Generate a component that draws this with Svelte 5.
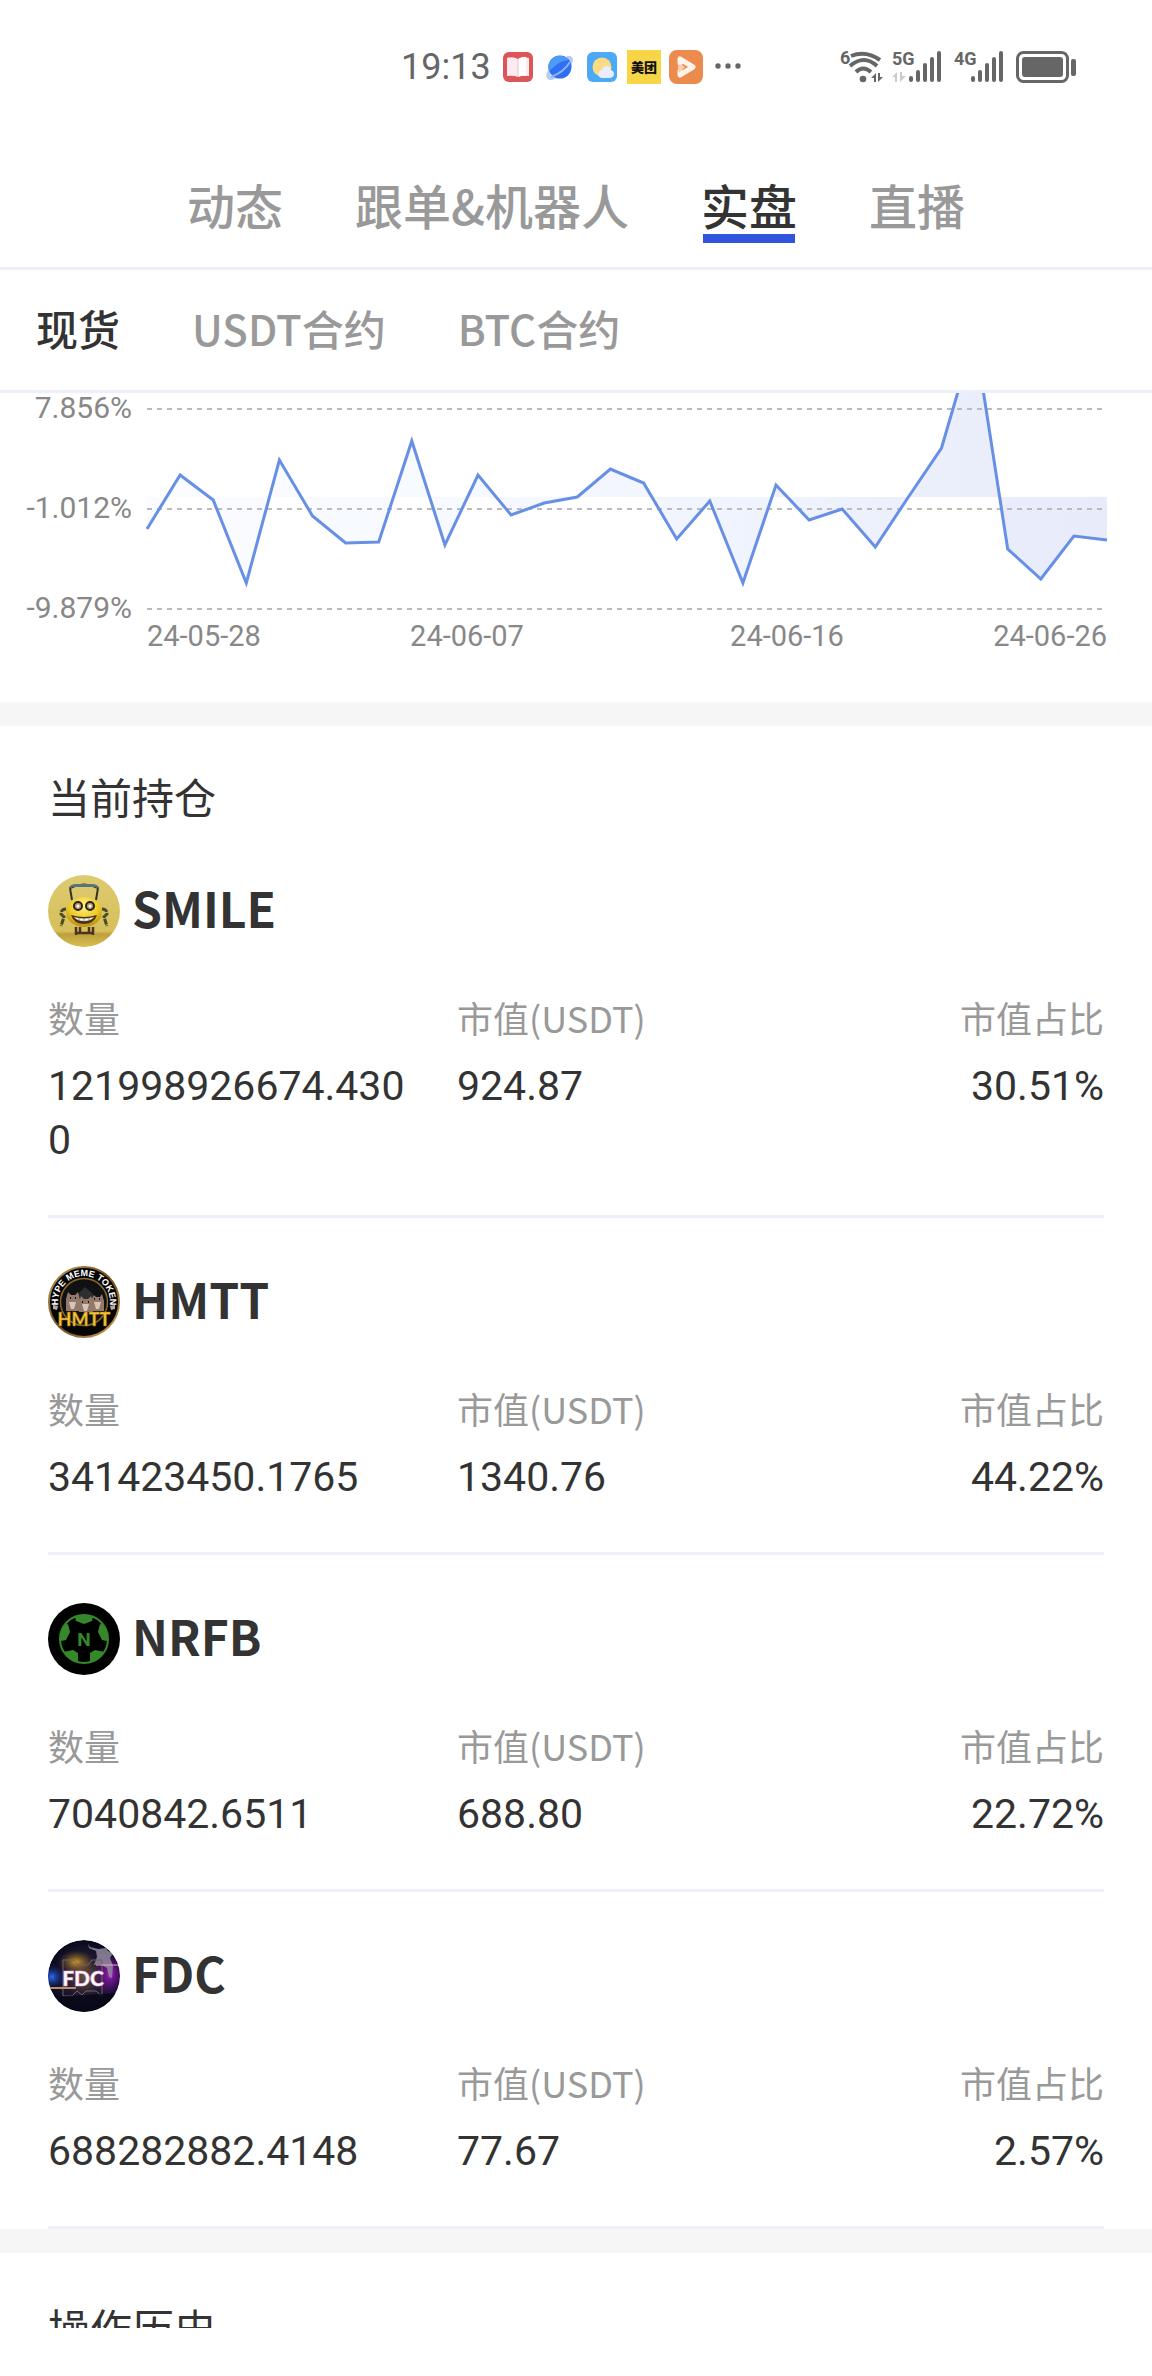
<script lang="ts">
	type Holding = {
		symbol: string;
		amount: string;
		value: string;
		share: string;
	};

	const tabs = ['动态', '跟单&机器人', '实盘', '直播'];
	const markets = ['现货', 'USDT合约', 'BTC合约'];

	let activeTab = $state('实盘');
	let activeMarket = $state('现货');

	const holdings: Holding[] = [
		{ symbol: 'SMILE', amount: '121998926674.4300', value: '924.87', share: '30.51%' },
		{ symbol: 'HMTT', amount: '341423450.1765', value: '1340.76', share: '44.22%' },
		{ symbol: 'NRFB', amount: '7040842.6511', value: '688.80', share: '22.72%' },
		{ symbol: 'FDC', amount: '688282882.4148', value: '77.67', share: '2.57%' }
	];

	// chart geometry, in viewBox units
	const left = 147;
	const right = 1107;
	const baseline = 104;
	const levels = [
		136, 82, 107, 190, 67, 123, 150, 149, 48, 152, 82, 122, 110, 104, 76, 90, 146, 108, 190, 92,
		127, 116, 154, 104, 55, -58, 156, 186, 143, 147
	];
	const step = (right - left) / (levels.length - 1);
	const line = levels.map((y, i) => `${(left + i * step).toFixed(1)},${y}`).join(' ');
	const area = `${left},${baseline} ${line} ${right},${baseline}`;

	const grid = [
		{ y: 16, label: '7.856%' },
		{ y: 116, label: '-1.012%' },
		{ y: 216, label: '-9.879%' }
	];
	const dates = [
		{ x: left, anchor: 'start', label: '24-05-28' },
		{ x: 467, anchor: 'middle', label: '24-06-07' },
		{ x: 787, anchor: 'middle', label: '24-06-16' },
		{ x: right, anchor: 'end', label: '24-06-26' }
	];
</script>

{#snippet bars()}
	<rect x="0" y="25" width="4" height="6" rx="2" />
	<rect x="7" y="19" width="4" height="12" rx="2" />
	<rect x="14" y="12" width="4" height="19" rx="2" />
	<rect x="21" y="6" width="4" height="25" rx="2" />
	<rect x="28" y="0" width="4" height="31" rx="2" />
{/snippet}

{#snippet coin(symbol: string)}
	<svg class="coin" viewBox="0 0 72 72" aria-hidden="true">
		{#if symbol === 'SMILE'}
			<defs>
				<linearGradient id="gold" x1="0" y1="0" x2="0" y2="1">
					<stop offset="0" stop-color="#decb70" />
					<stop offset="0.78" stop-color="#d6bf5c" />
					<stop offset="0.82" stop-color="#bd9f3e" />
					<stop offset="1" stop-color="#d9c050" />
				</linearGradient>
				<radialGradient id="lemon" cx="0.5" cy="0.3" r="0.7">
					<stop offset="0" stop-color="#fff38a" />
					<stop offset="0.6" stop-color="#eccb27" />
					<stop offset="1" stop-color="#b88a12" />
				</radialGradient>
			</defs>
			<circle cx="36" cy="36" r="36" fill="url(#gold)" />
			<path d="M24 25 22 13q14-7 28 0l-2 12" fill="none" stroke="#35331f" stroke-width="2" />
			<path d="M21 14q0-5 8-5h14q8 0 8 5l-4-2H25z" fill="#55737a" />
			<path
				d="M18 34q-5 0-5 5l3 3-3 9M54 34q5 0 5 5l-3 3 3 9"
				fill="none"
				stroke="#4b4a2c"
				stroke-width="3"
				stroke-dasharray="6 1"
			/>
			<ellipse cx="36" cy="37" rx="18" ry="15" fill="url(#lemon)" />
			<circle cx="30" cy="31" r="4" fill="#c59b65" stroke="#27231b" stroke-width="2" />
			<circle cx="42" cy="31" r="4" fill="#c59b65" stroke="#27231b" stroke-width="2" />
			<circle cx="30" cy="31" r="1.5" fill="#fff" />
			<circle cx="42" cy="31" r="1.5" fill="#fff" />
			<path d="M23 40q13 4 26 0-3 9-13 9t-13-9z" fill="#4d3210" />
			<path d="M26 42q10 3 20 0-3 4-10 4t-10-4z" fill="#f4f8f4" />
			<path d="M31 42v4M36 43v4M41 42v4" stroke="#777" stroke-width="0.7" />
			<path d="M28 52v8M32 52v7M41 52v7M45 52v8M28 58h17" stroke="#4d341f" stroke-width="2.5" />
		{:else if symbol === 'HMTT'}
			<defs>
				<linearGradient id="rim" x1="0" y1="0" x2="1" y2="1">
					<stop offset="0" stop-color="#c79b51" />
					<stop offset="0.5" stop-color="#6f4b20" />
					<stop offset="1" stop-color="#d1a65e" />
				</linearGradient>
			</defs>
			<circle cx="36" cy="36" r="35" fill="#050505" stroke="url(#rim)" stroke-width="2" />
			<circle cx="36" cy="36" r="23.5" fill="#101113" stroke="#8b692b" stroke-width="1.5" />
			<path id="ring" d="M12 46A26 26 0 1 1 60 46" fill="none" />
			<text class="coin-ring">
				<textPath href="#ring" startOffset="50%" text-anchor="middle">HYPE MEME TOKEN</textPath>
			</text>
			<path d="M30 28l7-7 8 7v14H30z" fill="#2c2e31" />
			<path
				d="M18 45V33l2-7 3 3h4l3-3 2 8v11zM31 46V36l2-6 3 3h4l3-3 2 6v10zM43 45V34l3-5 2 2h4l2-3 2 7v10z"
				fill="#92796a"
			/>
			<path d="M21 36h7l-2 7h-3zM34 38h7l-2 7h-3zM46 36h7l-2 7h-3z" fill="#d7c5b8" />
			<path
				d="M22 32h1m4 0h1m6 4h1m5 0h1m5-3h1m4 0h1"
				stroke="#1b1410"
				stroke-width="2"
			/>
			<path d="M5 39l5 1-1 4-4-1zM67 39l-5 1 1 4 4-1z" fill="#b7aaa0" />
			<text class="coin-hmtt" x="36" y="60" text-anchor="middle">HMTT</text>
		{:else if symbol === 'NRFB'}
			<circle cx="36" cy="36" r="36" fill="#000" />
			<clipPath id="ball"><circle cx="36" cy="36" r="24" /></clipPath>
			<g clip-path="url(#ball)" fill="#35892a">
				<path d="M26 9h20l-2 9-8 3-8-3z" />
				<path d="M9 23l11-2 2 8-4 8-9 2z" />
				<path d="M63 23l-11-2-2 8 4 8 9 2z" />
				<path d="M15 49l10-2 5 3v12H17z" />
				<path d="M57 49l-10-2-5 3v12h13z" />
			</g>
			<circle cx="36" cy="36" r="24" fill="none" stroke="#35892a" stroke-width="2" />
			<text class="coin-nrfb" x="36" y="43" text-anchor="middle">N</text>
		{:else}
			<defs>
				<radialGradient id="night">
					<stop offset="0" stop-color="#67513a" />
					<stop offset="0.55" stop-color="#1e1930" />
					<stop offset="1" stop-color="#07091c" />
				</radialGradient>
				<radialGradient id="violet">
					<stop offset="0" stop-color="#a41cc4" />
					<stop offset="1" stop-color="#5c0e8a" stop-opacity="0" />
				</radialGradient>
				<radialGradient id="azure">
					<stop offset="0" stop-color="#2c6df5" />
					<stop offset="1" stop-color="#142f99" stop-opacity="0" />
				</radialGradient>
				<radialGradient id="amber">
					<stop offset="0" stop-color="#d29b27" />
					<stop offset="1" stop-color="#6b4c1b" stop-opacity="0" />
				</radialGradient>
				<clipPath id="disc"><circle cx="36" cy="36" r="36" /></clipPath>
			</defs>
			<g clip-path="url(#disc)">
				<circle cx="36" cy="36" r="36" fill="url(#night)" />
				<ellipse cx="62" cy="34" rx="17" ry="24" fill="url(#violet)" />
				<circle cx="4" cy="37" r="12" fill="url(#azure)" />
				<ellipse cx="28" cy="22" rx="18" ry="12" fill="url(#amber)" />
				<path
					d="M40 4l2 3 8 2 8-1 2 3 5 2-3 5 3 8-1 12-3-1-2-9-7-4-6 1 3-8-1-6-7-3z"
					fill="#92899c"
					opacity="0.85"
				/>
				<path d="M15 20h11l4 5h10l4-5h10v36l-6-5H38l-4 4-5-4-5 5h-9z" fill="none" stroke="#746173" />
				<path d="M48 25h24" stroke="#e6a6c8" />
				<path d="M0 48h28" stroke="#bd8c6b" stroke-width="2" />
				<path d="M0 57l72-4v19H0z" fill="#080818" opacity="0.8" />
				<text class="coin-fdc" x="35" y="46" text-anchor="middle">FDC</text>
			</g>
		{/if}
	</svg>
{/snippet}

<div class="screen">
	<header class="status-bar">
		<div class="status-left">
			<time>19:13</time>
			<svg width="30" height="30" viewBox="0 0 30 30" aria-hidden="true">
				<rect width="30" height="30" rx="6" fill="#dc5557" />
				<path d="M4 6q6-2 11 1 5-3 11-1v18q-6-1-11 1-5-2-11-1z" fill="#fbeaf0" />
				<path d="M15 7q5-3 8-2v19q-4-1-8 1z" fill="#fff" />
				<path d="M15 7v18" stroke="#e8c1cb" />
			</svg>
			<svg width="30" height="30" viewBox="0 0 30 30" aria-hidden="true">
				<path
					d="M5 19q-4 7 1 7Q19 23 25 11q3-6-3-5"
					fill="none"
					stroke="#b4cdf8"
					stroke-width="4"
				/>
				<circle cx="15" cy="15" r="11.5" fill="#2f70f2" />
				<path d="M5 9Q9 3 16 4q5 0 8 4-8 0-15 7l-5 4q-2-5 1-10z" fill="#4d9af8" />
				<path d="M6 25Q19 20 25 10" fill="none" stroke="#89b4fb" stroke-width="2" />
			</svg>
			<svg width="30" height="30" viewBox="0 0 30 30" aria-hidden="true">
				<rect width="30" height="30" rx="6" fill="#4ca9f5" />
				<circle cx="15" cy="15" r="9.5" fill="#fbdc83" />
				<path d="M16 26a4 4 0 0 1-1-8q1-4 5-4 4 1 4 4 3 1 3 4t-4 4z" fill="#e9eefa" />
			</svg>
			<svg class="wide" width="34" height="34" viewBox="0 0 34 34" aria-hidden="true">
				<rect width="34" height="34" fill="#f8d547" />
				<text class="meituan" x="17" y="22" text-anchor="middle">美团</text>
			</svg>
			<svg class="wide" width="34" height="34" viewBox="0 0 34 34" aria-hidden="true">
				<rect width="34" height="34" rx="8" fill="#ec8b4e" />
				<path
					d="M11 9v4M11 9l13 8-13 8v-4"
					fill="none"
					stroke="#fff4ea"
					stroke-width="5"
					stroke-linecap="round"
					stroke-linejoin="round"
				/>
				<path d="M9 17q0-4 4-2l3 2-6 6z" fill="#f9cfb0" />
			</svg>
			<svg class="dots" width="26" height="30" viewBox="0 0 26 30" aria-hidden="true" fill="#666">
				<circle cx="3" cy="14" r="2.7" />
				<circle cx="13" cy="14" r="2.7" />
				<circle cx="23" cy="14" r="2.7" />
			</svg>
		</div>
		<div class="status-right">
			<svg width="44" height="34" viewBox="0 0 44 34" aria-hidden="true" fill="#666">
				<text class="net" x="0" y="14">6</text>
				<g fill="none" stroke="#666" stroke-width="4">
					<path d="M11 6q15-6 29 4" />
					<path d="M10 16q14-12 27 0" />
					<path d="M16 22q7-7 15 0" />
				</g>
				<circle cx="23" cy="29" r="3.3" />
				<path d="M31 28l5-5v9h-2v-4zM38 23v9l5-5h-3v-4z" />
			</svg>
			<svg width="50" height="34" viewBox="0 0 50 34" aria-hidden="true" fill="#666">
				<text class="net" x="0" y="15">5G</text>
				<path d="M0 27l5-5v10H3v-5zM8 22v10l6-6h-4v-4z" fill="#ccc" />
				<g transform="translate(17 1)">{@render bars()}</g>
			</svg>
			<svg width="50" height="34" viewBox="0 0 50 34" aria-hidden="true" fill="#666">
				<text class="net" x="0" y="15">4G</text>
				<g transform="translate(17 1)">{@render bars()}</g>
			</svg>
			<svg width="60" height="34" viewBox="0 0 60 34" aria-hidden="true" fill="#666">
				<rect x="1.5" y="2.5" width="50" height="29" rx="6" fill="none" stroke="#666" stroke-width="3" />
				<rect x="6" y="7" width="41" height="20" rx="3" />
				<rect x="55" y="9" width="5" height="17" rx="2" />
			</svg>
		</div>
	</header>

	<nav class="tabs">
		{#each tabs as tab}
			<button class:active={tab === activeTab} onclick={() => (activeTab = tab)}>{tab}</button>
		{/each}
	</nav>

	<nav class="markets">
		{#each markets as market}
			<button class:active={market === activeMarket} onclick={() => (activeMarket = market)}>
				{market}
			</button>
		{/each}
	</nav>

	<main>
		<svg class="chart" viewBox="0 0 1152 309" role="img" aria-label="收益率">
			<defs>
				<linearGradient id="fade" x1="0" x2="1" y1="0" y2="0">
					<stop offset="0" stop-color="#fafcff" />
					<stop offset="0.35" stop-color="#f6f9ff" />
					<stop offset="0.7" stop-color="#eef2fd" />
					<stop offset="1" stop-color="#e7ebfa" />
				</linearGradient>
			</defs>
			<polygon points={area} fill="url(#fade)" />
			{#each grid as row}
				<line class="rule" x1={left} x2={right} y1={row.y} y2={row.y} />
				<text class="level" x="132" y={row.y + 9} text-anchor="end">{row.label}</text>
			{/each}
			<polyline class="trend" points={line} />
			{#each dates as date}
				<text class="date" x={date.x} y="253" text-anchor={date.anchor}>{date.label}</text>
			{/each}
		</svg>

		<section class="holdings">
			<h2>当前持仓</h2>
			{#each holdings as item}
				<article>
					<h3>{@render coin(item.symbol)}<span>{item.symbol}</span></h3>
					<dl>
						<div>
							<dt>数量</dt>
							<dd>{item.amount}</dd>
						</div>
						<div>
							<dt>市值(USDT)</dt>
							<dd>{item.value}</dd>
						</div>
						<div class="share">
							<dt>市值占比</dt>
							<dd>{item.share}</dd>
						</div>
					</dl>
				</article>
			{/each}
		</section>

		<section class="history">
			<h2>操作历史</h2>
		</section>
	</main>
</div>

<style>
	:global(body) {
		margin: 0;
		background: #fff;
	}
	.screen {
		box-sizing: border-box;
		display: flex;
		flex-direction: column;
		height: 100vh;
		padding-bottom: 48px;
		background: #fff;
		color: #333;
		font-family: 'Noto Sans CJK SC', 'Noto Sans', sans-serif;
	}
	button {
		padding: 0;
		border: 0;
		background: none;
		color: #999;
		font: inherit;
		cursor: pointer;
	}

	.status-bar {
		display: flex;
		flex: none;
		justify-content: space-between;
		align-items: center;
		height: 134px;
		padding: 0 76px 0 401px;
	}
	.status-left {
		display: flex;
		align-items: center;
		gap: 12px;
	}
	.status-left .wide {
		margin: 0 -2px;
	}
	.status-left time {
		color: #666;
		font-family: Roboto, sans-serif;
		font-size: 36px;
		line-height: 40px;
	}
	.status-left .dots {
		margin-left: 2px;
	}
	.status-right {
		display: flex;
		align-items: center;
		gap: 12px;
	}
	.status-right svg:first-child {
		margin-right: -4px;
	}
	.net {
		font-family: Roboto, sans-serif;
		font-size: 18px;
		font-weight: 700;
	}
	.meituan {
		fill: #111;
		font-size: 13px;
		font-weight: 900;
	}

	.tabs {
		display: flex;
		flex: none;
		justify-content: center;
		align-items: flex-start;
		gap: 72px;
		padding: 44px 0 24px;
		border-bottom: 3px solid #edf0f8;
		font-size: 48px;
		font-weight: 500;
		line-height: 52px;
	}
	.tabs button::after {
		content: '';
		display: block;
		height: 9px;
		margin: 4px 2px 0;
	}
	.tabs .active {
		color: #333;
	}
	.tabs .active::after {
		background: #3154dc;
	}

	.markets {
		display: flex;
		flex: none;
		gap: 72px;
		padding: 30px 36px 34px;
		border-bottom: 3px solid #edf0f8;
		font-size: 42px;
		font-weight: 500;
		line-height: 56px;
	}
	.markets .active {
		color: #333;
	}

	main {
		flex: 1;
		min-height: 0;
		overflow: hidden;
	}
	.chart {
		display: block;
		width: 100%;
	}
	.rule {
		stroke: #bbb;
		stroke-width: 2;
		stroke-dasharray: 5 5;
	}
	.trend {
		fill: none;
		stroke: #688fe6;
		stroke-width: 3;
	}
	.level,
	.date {
		fill: #888;
		font-family: Roboto, sans-serif;
	}
	.level {
		font-size: 30px;
	}
	.date {
		font-size: 29px;
	}

	section {
		padding: 0 48px;
		border-top: 24px solid #f6f6f6;
	}
	h2 {
		margin: 0;
		padding: 42px 0 3px;
		font-size: 42px;
		font-weight: 400;
		line-height: 56px;
	}
	.history h2 {
		padding-top: 46px;
	}
	article {
		padding: 48px 0;
		border-bottom: 3px solid #edf0f8;
	}
	h3 {
		display: flex;
		align-items: center;
		gap: 12px;
		margin: 0 0 43px;
		font-size: 48px;
		font-weight: 700;
		line-height: 64px;
	}
	h3 span {
		padding-bottom: 8px;
	}
	.coin {
		width: 72px;
		height: 72px;
	}
	dl {
		display: grid;
		grid-template-columns: 369fr 290fr 317fr;
		gap: 40px;
		margin: 0;
	}
	dt {
		margin-bottom: 15px;
		color: #999;
		font-size: 36px;
		line-height: 54px;
	}
	dd {
		margin: 0;
		font-family: Roboto, sans-serif;
		font-size: 41px;
		line-height: 54px;
		overflow-wrap: anywhere;
	}
	.share {
		text-align: right;
	}

	.coin-ring {
		fill: #fff;
		font-family: 'Liberation Sans', sans-serif;
		font-size: 9px;
		font-weight: 700;
	}
	.coin-hmtt {
		fill: #f4c536;
		stroke: #97621a;
		stroke-width: 0.5px;
		font-family: Lato, sans-serif;
		font-size: 18px;
		font-weight: 900;
	}
	.coin-nrfb {
		fill: #35892a;
		font-family: Roboto, sans-serif;
		font-size: 19px;
		font-weight: 700;
	}
	.coin-fdc {
		fill: #fff;
		stroke: #e4a4e3;
		stroke-width: 0.6px;
		font-family: Lato, sans-serif;
		font-size: 21px;
		font-weight: 900;
	}
</style>
